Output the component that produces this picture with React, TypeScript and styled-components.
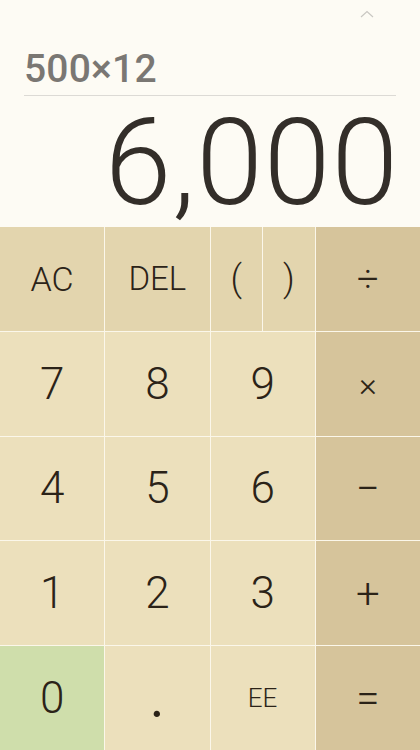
import React from 'react';
import styled, { createGlobalStyle } from 'styled-components';

const GlobalStyle = createGlobalStyle`
  html, body {
    margin: 0;
    padding: 0;
    background: #fdfbf4;
  }
  body {
    font-family: Roboto, "Liberation Sans", sans-serif;
  }
`;

type Tone = 'top' | 'num' | 'op' | 'zero';

const toneColors: Record<Tone, string> = {
  top: '#e3d5ae',
  num: '#ece0bc',
  op: '#d6c49b',
  zero: '#cfdeab',
};

type KeyDef = { label: string; tone: Tone; size?: number; shift?: number };

const rows: KeyDef[][] = [
  [
    { label: 'AC', tone: 'top', size: 34 },
    { label: 'DEL', tone: 'top', size: 33 },
    { label: '()', tone: 'top' },
    { label: '÷', tone: 'op', size: 38 },
  ],
  [
    { label: '7', tone: 'num' },
    { label: '8', tone: 'num' },
    { label: '9', tone: 'num' },
    { label: '×', tone: 'op', size: 34 },
  ],
  [
    { label: '4', tone: 'num' },
    { label: '5', tone: 'num' },
    { label: '6', tone: 'num' },
    { label: '−', tone: 'op', size: 42 },
  ],
  [
    { label: '1', tone: 'num' },
    { label: '2', tone: 'num' },
    { label: '3', tone: 'num' },
    { label: '+', tone: 'op', size: 42 },
  ],
  [
    { label: '0', tone: 'zero' },
    { label: '.', tone: 'num', size: 76, shift: -14 },
    { label: 'EE', tone: 'num', size: 26 },
    { label: '=', tone: 'op', size: 42 },
  ],
];

function App() {
  return (
    <>
      <GlobalStyle />
      <Screen>
        <Display>
          <ChevronRow>
            <svg width="14" height="8" viewBox="0 0 14 8">
              <path d="M1 7 L7 1.5 L13 7" fill="none" stroke="#c9c7c2" strokeWidth="1.2" />
            </svg>
          </ChevronRow>
          <Expression>500×12</Expression>
          <Divider />
          <Result>6,000</Result>
        </Display>
        <Keypad>
          {rows.flat().map((k, i) =>
            k.label === '()' ? (
              <SplitKey key={i} $tone={k.tone}>
                <ParenKey>(</ParenKey>
                <ParenKey>)</ParenKey>
              </SplitKey>
            ) : (
              <Key key={i} $tone={k.tone} $size={k.size ?? 44} $shift={k.shift ?? 0}>
                <span>{k.label}</span>
              </Key>
            )
          )}
        </Keypad>
      </Screen>
    </>
  );
}

export default App;

const Screen = styled.div`
  width: 420px;
  height: 750px;
  display: flex;
  flex-direction: column;
  background: #fdfbf4;
  overflow: hidden;
`;

const Display = styled.div`
  height: 227px;
  padding: 0 24px;
  display: flex;
  flex-direction: column;
  box-sizing: border-box;
`;

const ChevronRow = styled.div`
  height: 18px;
  display: flex;
  justify-content: flex-end;
  align-items: flex-end;
  padding-right: 22px;
`;

const Expression = styled.div`
  margin-top: 31px;
  font-size: 39px;
  font-weight: 500;
  line-height: 40px;
  color: #7a7773;
  letter-spacing: 0.2px;
`;

const Divider = styled.div`
  margin-top: 6px;
  height: 1px;
  background: #dcdad5;
`;

const Result = styled.div`
  margin-top: 12px;
  text-align: right;
  font-size: 120px;
  font-weight: 300;
  line-height: 110px;
  color: #332e29;
  margin-right: -3px;
  letter-spacing: 1px;
`;

const Keypad = styled.div`
  flex: 1;
  display: grid;
  grid-template-columns: repeat(4, 1fr);
  grid-template-rows: repeat(5, 1fr);
  gap: 1px;
  background: #fbf7ea;
`;

const Key = styled.div<{ $tone: Tone; $size: number; $shift: number }>`
  display: flex;
  align-items: center;
  justify-content: center;
  background: ${(p) => toneColors[p.$tone]};
  font-size: ${(p) => p.$size}px;
  font-weight: 300;
  color: #2b2318;

  span {
    margin-top: ${(p) => p.$shift}px;
  }
`;

const SplitKey = styled.div<{ $tone: Tone }>`
  display: grid;
  grid-template-columns: 1fr 1fr;
  gap: 1px;
  background: #fbf7ea;
  & > * {
    background: ${(p) => toneColors[p.$tone]};
  }
`;

const ParenKey = styled.div`
  display: flex;
  align-items: center;
  justify-content: center;
  font-size: 36px;
  font-weight: 300;
  color: #2b2318;
`;
